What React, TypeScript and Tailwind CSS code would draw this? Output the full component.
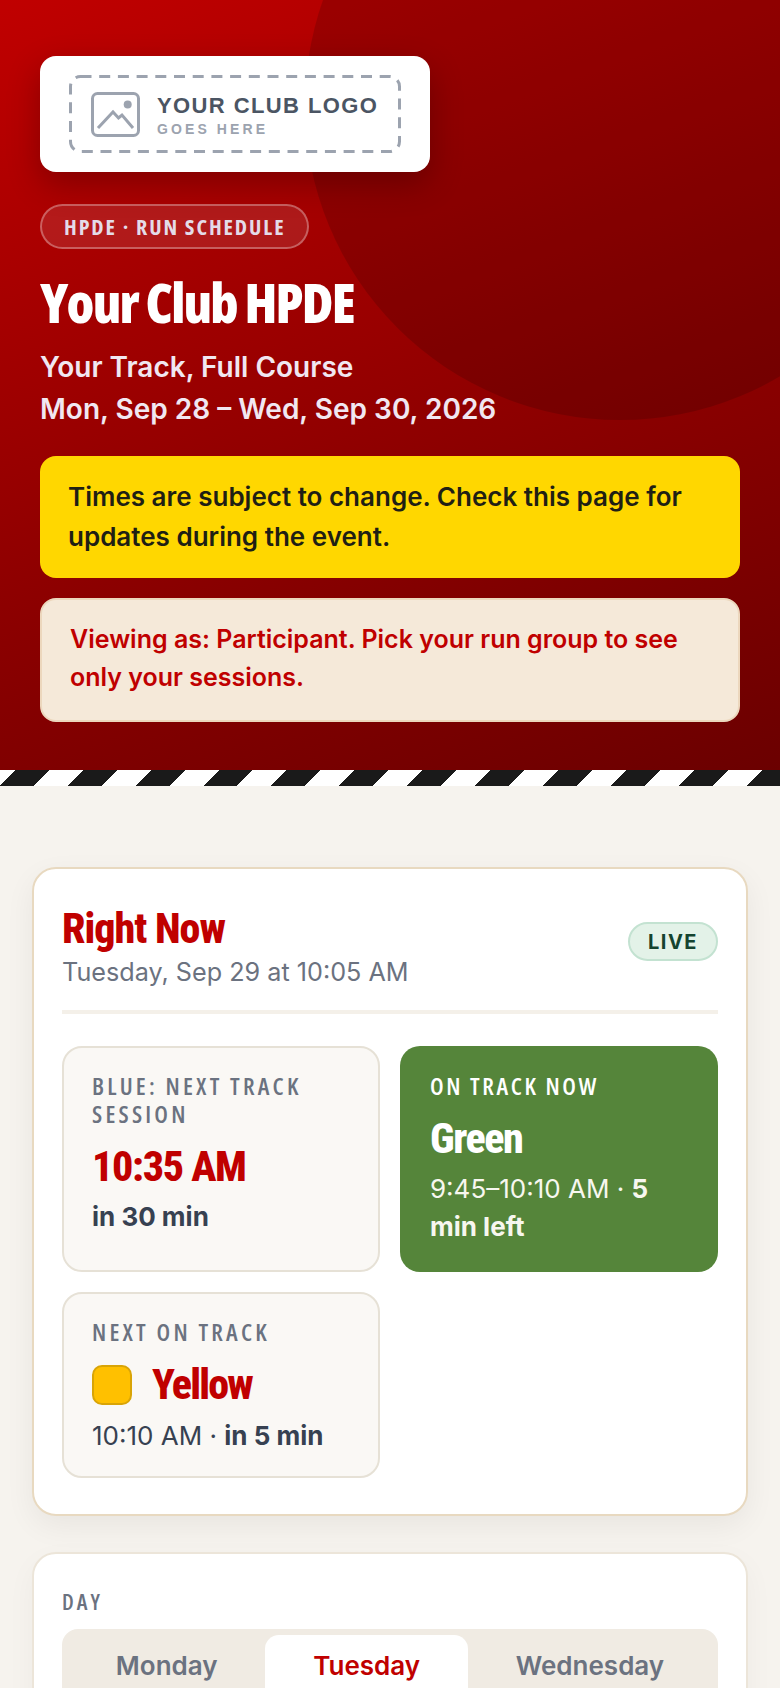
const condensed = "font-['Open_Sans',sans-serif] font-stretch-condensed";
const heading = "font-['Roboto',sans-serif] font-stretch-condensed font-extrabold";

function LogoPlaceholder() {
  return (
    <div className="relative z-10 h-[116px] w-[390px] rounded-2xl bg-white px-[29px] py-[19px] shadow-[0_12px_32px_rgba(0,0,0,0.25)]">
      <div className="relative flex h-full items-center gap-[17px] pl-[22px]">
        <svg className="absolute inset-0" width="332" height="78" viewBox="0 0 332 78" fill="none">
          <rect x="1.5" y="1.5" width="329" height="75" rx="10" stroke="#9ca3af" strokeWidth="3" strokeDasharray="11 7.7" />
        </svg>
        <svg width="49" height="45" viewBox="0 0 49 45" fill="none" stroke="#9ca3af" strokeWidth="3">
          <rect x="1.5" y="1.5" width="46" height="42" rx="5" />
          <circle cx="36.7" cy="12.5" r="4" fill="#9ca3af" stroke="none" />
          <path d="M7 36 L22 20 L27.5 26 L31 23 L42 36" />
        </svg>
        <div className="pt-1 font-['Liberation_Sans',sans-serif] font-bold">
          <div className="text-[22px] leading-[24px] tracking-[1.4px] text-[#4b5563]">YOUR CLUB LOGO</div>
          <div className="mt-[2px] text-[14px] leading-[18px] tracking-[3.1px] text-[#9ca3af]">GOES HERE</div>
        </div>
      </div>
    </div>
  );
}

function SubCard({ label, className, children }: { label: string; className: string; children: React.ReactNode }) {
  return (
    <div className={`rounded-[20px] border-2 border-[#e6e1d6] bg-[#faf8f5] px-[28px] pt-[24px] ${className}`}>
      <div className={`${condensed} text-[24px] font-semibold leading-[28px] tracking-[3.2px] text-[#6b7280]`}>{label}</div>
      {children}
    </div>
  );
}

export default function App() {
  return (
    <div className="h-[1688px] overflow-hidden bg-[#f6f3ee] font-['Inter',sans-serif]">
      <header className="relative overflow-hidden bg-[linear-gradient(160deg,#c00000_0%,#8b0000_60%,#6b0000_100%)] px-10 pt-14 pb-12">
        <div className="absolute top-[-210px] left-[305px] h-[630px] w-[630px] rounded-full bg-black/15" />
        <LogoPlaceholder />
        <div className="relative mt-8 flex h-[45px] w-[269px] items-center rounded-full border-2 border-white/30 bg-white/10 px-[22px]">
          <span className={`${condensed} whitespace-nowrap text-[22px] font-bold tracking-[1.9px] text-[#e4dbe8]`}>HPDE · RUN SCHEDULE</span>
        </div>
        <h1 className={`${condensed} relative mt-[23px] text-[54px] font-extrabold leading-[60px] tracking-[-1.8px] text-white`}>Your Club HPDE</h1>
        <div className="relative mt-[14px] text-[28px] font-semibold leading-[42px] text-[#f1e7f1]">
          <p>Your Track, Full Course</p>
          <p>Mon, Sep 28 – Wed, Sep 30, 2026</p>
        </div>
        <div className="relative mt-[26px] rounded-2xl bg-[#ffd700] px-[28px] py-[21px] text-[26px] font-semibold leading-[40px] text-[#1f1f14]">
          Times are subject to change. Check this page for updates during the event.
        </div>
        <div className="relative mt-5 rounded-2xl border-2 border-[#ecd7bd] bg-[#f5e9d9] px-[28px] pt-[20px] pb-[24px] text-[25px] font-semibold leading-[38px] text-[#c00000]">
          Viewing as: Participant. Pick your run group to see only your sessions.
        </div>
      </header>

      <div className="h-4 bg-[repeating-linear-gradient(-45deg,#1a1a1a_0_24px,#fff_24px_48px)]" />

      <main className="mx-8 mt-[81px]">
        <section className="rounded-3xl border-2 border-[#e8d9c0] bg-white px-[28px] pt-[37px] pb-9 shadow-[0_10px_30px_rgba(0,0,0,0.06)]">
          <div className="flex items-start justify-between border-b-4 border-[#f4f0e9] pb-[22px]">
            <div>
              <h2 className={`${heading} text-[42px] leading-[46px] tracking-[-1px] text-[#c00000]`}>Right Now</h2>
              <p className="mt-1 text-[25.2px] leading-[32px] text-[#6b7280]">Tuesday, Sep 29 at 10:05 AM</p>
            </div>
            <span className="mt-4 flex h-[39px] w-[90px] items-center justify-center rounded-full border-2 border-[#c3e2d1] bg-[#e3f2e8] text-[20px] font-bold tracking-[1.5px] text-[#14432f]">LIVE</span>
          </div>

          <div className="mt-8 grid grid-cols-2 gap-5">
            <SubCard label="BLUE: NEXT TRACK SESSION" className="pb-[25px]">
              <div className={`${heading} mt-[14px] text-[42px] leading-[50px] tracking-[-1.3px] text-[#c00000]`}>10:35 AM</div>
              <div className="mt-[6px] text-[26px] font-bold leading-[38px] text-[#374151]">in 30 min</div>
            </SubCard>
            <div className="rounded-[20px] bg-[#55853a] px-[30px] pt-[26px] pb-[26px] text-[#f7f7ef]">
              <div className={`${condensed} text-[24px] font-semibold leading-[28px] tracking-[2.6px] text-white`}>ON TRACK NOW</div>
              <div className={`${heading} mt-[14px] text-[42px] leading-[50px] tracking-[-1.5px] text-white`}>Green</div>
              <div className="mt-[6px] text-[26px] leading-[38px]">9:45–10:10 AM · <strong className="font-bold">5 min left</strong></div>
            </div>
            <SubCard label="NEXT ON TRACK" className="pb-[21px]">
              <div className="mt-[14px] flex items-center gap-5">
                <span className="h-10 w-10 rounded-[10px] border-2 border-[#d9a406] bg-[#ffc000]" />
                <span className={`${heading} text-[42px] leading-[50px] tracking-[-1.8px] text-[#c00000]`}>Yellow</span>
              </div>
              <div className="mt-[7px] text-[26px] leading-[38px] text-[#374151]">10:10 AM · <strong className="font-bold">in 5 min</strong></div>
            </SubCard>
          </div>
        </section>

        <section className="mt-9 rounded-3xl border-2 border-[#ece5d9] bg-white px-[28px] pt-[34px] shadow-[0_10px_30px_rgba(0,0,0,0.04)]">
          <div className={`${condensed} text-[22px] font-semibold leading-[26px] tracking-[3px] text-[#6b7280]`}>DAY</div>
          <div className="mt-[15px] flex rounded-2xl bg-[#f0ebe3] p-[6px]">
            <button className="flex-auto px-4 py-4 text-center text-[26px] font-semibold leading-[30px] text-[#6b7280]">
              Monday<span className="mt-1 block text-[20px] font-normal leading-[24px]">Sep 28</span>
            </button>
            <button className="flex-auto rounded-[14px] bg-white px-4 py-4 text-center text-[26px] font-semibold leading-[30px] text-[#c00000]">
              Tuesday<span className="mt-1 block text-[20px] font-normal leading-[24px] text-[#6b7280]">Sep 29</span>
            </button>
            <button className="flex-auto px-4 py-4 text-center text-[26px] font-semibold leading-[30px] text-[#6b7280]">
              Wednesday<span className="mt-1 block text-[20px] font-normal leading-[24px]">Sep 30</span>
            </button>
          </div>
        </section>
      </main>
    </div>
  );
}
